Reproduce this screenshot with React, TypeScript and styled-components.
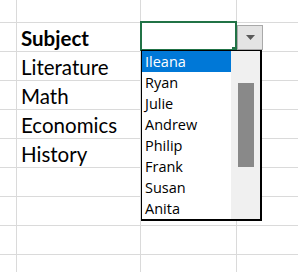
import { FC } from 'react';
import styled, { createGlobalStyle } from 'styled-components';

const GlobalStyle = createGlobalStyle`
  html, body {
    margin: 0;
    padding: 0;
    background: #fff;
    overflow: hidden;
  }
`;

const subjects = ['Subject', 'Literature', 'Math', 'Economics', 'History', '', '', '', ''];
const names = ['Ileana', 'Ryan', 'Julie', 'Andrew', 'Philip', 'Frank', 'Susan', 'Anita'];

const App: FC = () => (
  <>
    <GlobalStyle />
    <Sheet>
      <Row $first>
        <Cell $w={17} />
        <Cell $w={124} />
        <Cell $w={96} />
        <Cell $last />
      </Row>
      {subjects.map((subject, i) => (
        <Row key={i}>
          <Cell $w={17} />
          <Cell $w={124}>
            <CellText $bold={i === 0}>{subject}</CellText>
          </Cell>
          <Cell $w={96}>
            {i === 0 && (
              <>
                <Selection>
                  <FillHandle />
                </Selection>
                <DropButton>
                  <svg width="9" height="5" viewBox="0 0 9 5">
                    <path d="M0 0h9L4.5 5z" fill="#5a5a5a" />
                  </svg>
                </DropButton>
                <ListBox>
                  <Items>
                    {names.map((name, j) => (
                      <Item key={name} $active={j === 0}>
                        {name}
                      </Item>
                    ))}
                  </Items>
                  <ScrollTrack>
                    <ScrollThumb />
                  </ScrollTrack>
                </ListBox>
              </>
            )}
          </Cell>
          <Cell $last />
        </Row>
      ))}
    </Sheet>
  </>
);

export default App;

const Sheet = styled.div`
  width: 298px;
  height: 272px;
  overflow: hidden;
  background: #fff;
`;

const Row = styled.div<{ $first?: boolean }>`
  display: flex;
  flex-shrink: 0;
  height: ${p => (p.$first ? 23 : 29)}px;
  box-sizing: border-box;
  border-bottom: 1px solid #dadada;
`;

const Cell = styled.div<{ $w?: number; $last?: boolean }>`
  position: relative;
  box-sizing: border-box;
  flex: ${p => (p.$last ? '1' : `0 0 ${p.$w}px`)};
  border-right: ${p => (p.$last ? 'none' : '1px solid #dadada')};
  display: flex;
  align-items: flex-end;
`;

const CellText = styled.span<{ $bold?: boolean }>`
  font-family: Lato, 'Liberation Sans', sans-serif;
  font-size: 20.5px;
  font-weight: ${p => (p.$bold ? 700 : 400)};
  color: #000;
  line-height: 24px;
  padding: 0 0 1px 4px;
  white-space: nowrap;
`;

const Selection = styled.div`
  position: absolute;
  left: -1px;
  top: -2px;
  width: 97px;
  height: 30px;
  box-sizing: border-box;
  border: 2px solid #217346;
`;

const FillHandle = styled.div`
  position: absolute;
  right: -2px;
  bottom: -3px;
  width: 5px;
  height: 5px;
  background: #217346;
`;

const DropButton = styled.div`
  position: absolute;
  left: 96px;
  top: 2px;
  width: 26px;
  height: 25px;
  box-sizing: border-box;
  border: 1px solid #a9a9a9;
  background: #e4e4e4;
  display: flex;
  align-items: center;
  justify-content: center;
`;

const ListBox = styled.div`
  position: absolute;
  left: 0;
  top: 27px;
  width: 121px;
  height: 171px;
  box-sizing: border-box;
  border: 1px solid #000;
  border-right-width: 2px;
  border-bottom-width: 2px;
  background: #fff;
  display: flex;
  z-index: 2;
`;

const Items = styled.div`
  flex: 1;
  display: flex;
  flex-direction: column;
`;

const Item = styled.div<{ $active?: boolean }>`
  height: 21px;
  line-height: 21px;
  padding-left: 3px;
  font-family: 'Open Sans', 'Noto Sans', sans-serif;
  font-size: 14.5px;
  color: ${p => (p.$active ? '#fff' : '#000')};
  background: ${p => (p.$active ? '#0078d7' : 'transparent')};
`;

const ScrollTrack = styled.div`
  flex: 0 0 29px;
  background: #f0f0f0;
  display: flex;
  justify-content: center;
  padding-top: 32px;
`;

const ScrollThumb = styled.div`
  width: 16px;
  height: 84px;
  background: #898989;
`;
